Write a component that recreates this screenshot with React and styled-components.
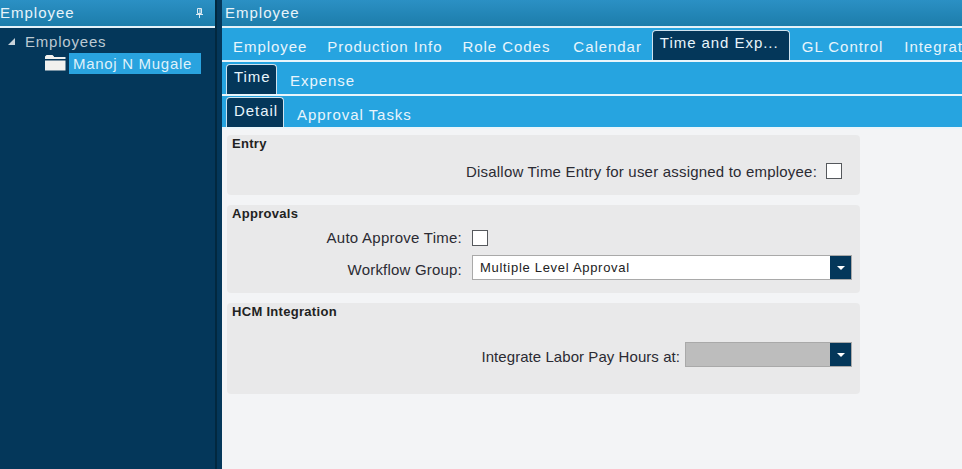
import React from "react";
import styled, { createGlobalStyle } from "styled-components";

const GlobalStyle = createGlobalStyle`
html, body {
  margin: 0;
  padding: 0;
  height: 100%;
  overflow: hidden;
}
body {
  font-family: "Liberation Sans", Arial, sans-serif;
  background: #04375a;
}
`;

const Page = styled.div`
display: flex;
width: 962px;
height: 469px;
overflow: hidden;
`;

const LeftPanel = styled.div`
width: 215px;
flex: none;
display: flex;
flex-direction: column;
background: #04375a;
border-right: 2px solid #02283f;
`;

const RightPanel = styled.div`
flex: 1;
min-width: 0;
margin-left: 5px;
display: flex;
flex-direction: column;
background: #f3f4f6;
`;

const Header = styled.div`
height: 25px;
flex: none;
display: flex;
align-items: center;
justify-content: space-between;
padding-left: ${(p) => p.$pad || 0}px;
padding-right: 12px;
padding-bottom: 1px;
background: linear-gradient(#2b90c4, #1c7dab);
border-bottom: 2px solid #e4f2f9;
color: #e8f4fa;
font-size: 15px;
letter-spacing: 1px;
`;

const Tree = styled.div`
padding: 2px 0 0 8px;
color: #bcc9d2;
font-size: 15px;
letter-spacing: 0.8px;
`;

const TreeRow = styled.div`
display: flex;
align-items: center;
height: 22px;
margin-left: ${(p) => p.$indent || 0}px;
`;

const Caret = styled.span`
width: 0;
height: 0;
margin-right: 10px;
border-left: 7px solid transparent;
border-bottom: 7px solid #c9d3da;
`;

const Selected = styled.span`
margin-left: 3px;
padding: 0 9px 0 4px;
height: 21px;
line-height: 21px;
background: #29a3df;
color: #dff1fa;
letter-spacing: 0.7px;
`;

const TabRow = styled.div`
height: ${(p) => p.$h}px;
flex: none;
display: flex;
align-items: flex-end;
padding-left: ${(p) => p.$pad || 3}px;
background: #26a4e0;
border-bottom: 2px solid #e9f5fb;
overflow: hidden;
white-space: nowrap;
`;

const Tab = styled.div`
flex: none;
height: ${(p) => p.$h}px;
box-sizing: border-box;
margin-right: ${(p) => p.$gap || 0}px;
padding: ${(p) => p.$top}px 7px 0;
width: ${(p) => (p.$w ? `${p.$w}px` : "auto")};
font-size: 15px;
letter-spacing: 0.95px;
color: #e8f5fc;
background: ${(p) => (p.$active ? "#04375a" : "transparent")};
border: ${(p) => (p.$active ? "1px solid #cfe3ef" : "1px solid transparent")};
border-bottom: none;
border-radius: 4px 4px 0 0;
`;

const Content = styled.div`
flex: 1;
padding: 6px 0 0 5px;
display: flex;
flex-direction: column;
gap: 10px;
`;

const Group = styled.section`
width: 633px;
height: ${(p) => p.$h}px;
box-sizing: border-box;
padding: 2px 8px 0 5px;
background: #e9e9ea;
border-radius: 4px;
color: #2b2b33;
`;

const GroupTitle = styled.div`
font-size: 13px;
font-weight: bold;
line-height: 14px;
letter-spacing: 0.3px;
color: #222;
`;

const Row = styled.div`
display: flex;
align-items: center;
height: ${(p) => p.$h || 24}px;
margin-top: ${(p) => p.$top || 0}px;
`;

const Label = styled.label`
width: ${(p) => p.$w}px;
flex: none;
box-sizing: border-box;
padding-top: ${(p) => p.$drop || 0}px;
padding-bottom: ${(p) => p.$lift || 0}px;
text-align: right;
font-size: 15px;
letter-spacing: ${(p) => p.$spacing ?? 0.2}px;
white-space: nowrap;
`;

const Checkbox = styled.span`
width: 14px;
height: 14px;
flex: none;
margin-left: ${(p) => p.$left}px;
background: #fff;
border: 1px solid #55585c;
`;

const Select = styled.div`
flex: none;
width: ${(p) => p.$w}px;
height: 25px;
box-sizing: border-box;
margin-left: ${(p) => p.$left}px;
display: flex;
align-items: center;
justify-content: space-between;
padding-left: 7px;
background: ${(p) => (p.$disabled ? "#bdbdbd" : "#fff")};
border: 1px solid #a9a9a9;
font-size: 13px;
letter-spacing: 0.7px;
color: #222;
`;

const SelectButton = styled.span`
width: 21px;
height: 23px;
display: flex;
align-items: center;
justify-content: center;
background: #04375a;
&::after {
  content: "";
  border-left: 4px solid transparent;
  border-right: 4px solid transparent;
  border-top: 4px solid #fff;
}
`;

const PinIcon = () => (
  <svg width="7" height="10" viewBox="0 0 7 10" fill="none">
    <path d="M1.5 0.500h4v5h-4z" stroke="#dcebf3" strokeWidth="1" />
    <path d="M0 6.500h7" stroke="#dcebf3" strokeWidth="1" />
    <path d="M3.500 7v3" stroke="#dcebf3" strokeWidth="1" />
    <path d="M4 1v4" stroke="#dcebf3" strokeWidth="1" />
  </svg>
);

const FolderIcon = () => (
  <svg width="21" height="16" viewBox="0 0 21 16" style={{ flex: "none" }}>
    <path d="M0 3V1.500L1.500 0h6L9 1.500V2h11.500v2H0z" fill="#f1f1ee" />
    <path d="M0 5.500h20.500V15.500H0z" fill="#f1f1ee" />
  </svg>
);

export default function App() {
  return (
    <Page>
      <GlobalStyle />
      <LeftPanel>
        <Header>
          Employee
          <PinIcon />
        </Header>
        <Tree>
          <TreeRow>
            <Caret />
            Employees
          </TreeRow>
          <TreeRow $indent={37}>
            <FolderIcon />
            <Selected>Manoj N Mugale</Selected>
          </TreeRow>
        </Tree>
      </LeftPanel>
      <RightPanel>
        <Header $pad={3}>Employee</Header>
        <TabRow $h={32}>
          <Tab $h={32} $top={9} $gap={4}>Employee</Tab>
          <Tab $h={32} $top={9} $gap={4}>Production Info</Tab>
          <Tab $h={32} $top={9} $gap={7}>Role Codes</Tab>
          <Tab $h={32} $top={9} $gap={2}>Calendar</Tab>
          <Tab $h={30} $top={3} $active $w={138} $gap={4}>Time and Exp...</Tab>
          <Tab $h={32} $top={9} $gap={5}>GL Control</Tab>
          <Tab $h={32} $top={9}>Integration</Tab>
        </TabRow>
        <TabRow $h={32} $pad={4}>
          <Tab $h={30} $top={3} $active $w={51} $gap={5}>Time</Tab>
          <Tab $h={32} $top={9}>Expense</Tab>
        </TabRow>
        <TabRow $h={31} $pad={4}>
          <Tab $h={30} $top={4} $active $w={58} $gap={5}>Detail</Tab>
          <Tab $h={31} $top={9}>Approval Tasks</Tab>
        </TabRow>
        <Content>
          <Group $h={60}>
            <GroupTitle>Entry</GroupTitle>
            <Row $top={8}>
              <Label $w={585}>Disallow Time Entry for user assigned to employee:</Label>
              <Checkbox $left={9} />
            </Row>
          </Group>
          <Group $h={88}>
            <GroupTitle>Approvals</GroupTitle>
            <Row $top={5}>
              <Label $w={230} $spacing={0.25} $lift={2}>Auto Approve Time:</Label>
              <Checkbox $left={10} />
            </Row>
            <Row $h={25} $top={5}>
              <Label $w={230} $drop={3}>Workflow Group:</Label>
              <Select $left={10} $w={380}>
                Multiple Level Approval
                <SelectButton />
              </Select>
            </Row>
          </Group>
          <Group $h={91}>
            <GroupTitle>HCM Integration</GroupTitle>
            <Row $h={25} $top={23}>
              <Label $w={448} $drop={3} $spacing={0.06}>Integrate Labor Pay Hours at:</Label>
              <Select $left={5} $w={167} $disabled>
                <span />
                <SelectButton />
              </Select>
            </Row>
          </Group>
        </Content>
      </RightPanel>
    </Page>
  );
}
